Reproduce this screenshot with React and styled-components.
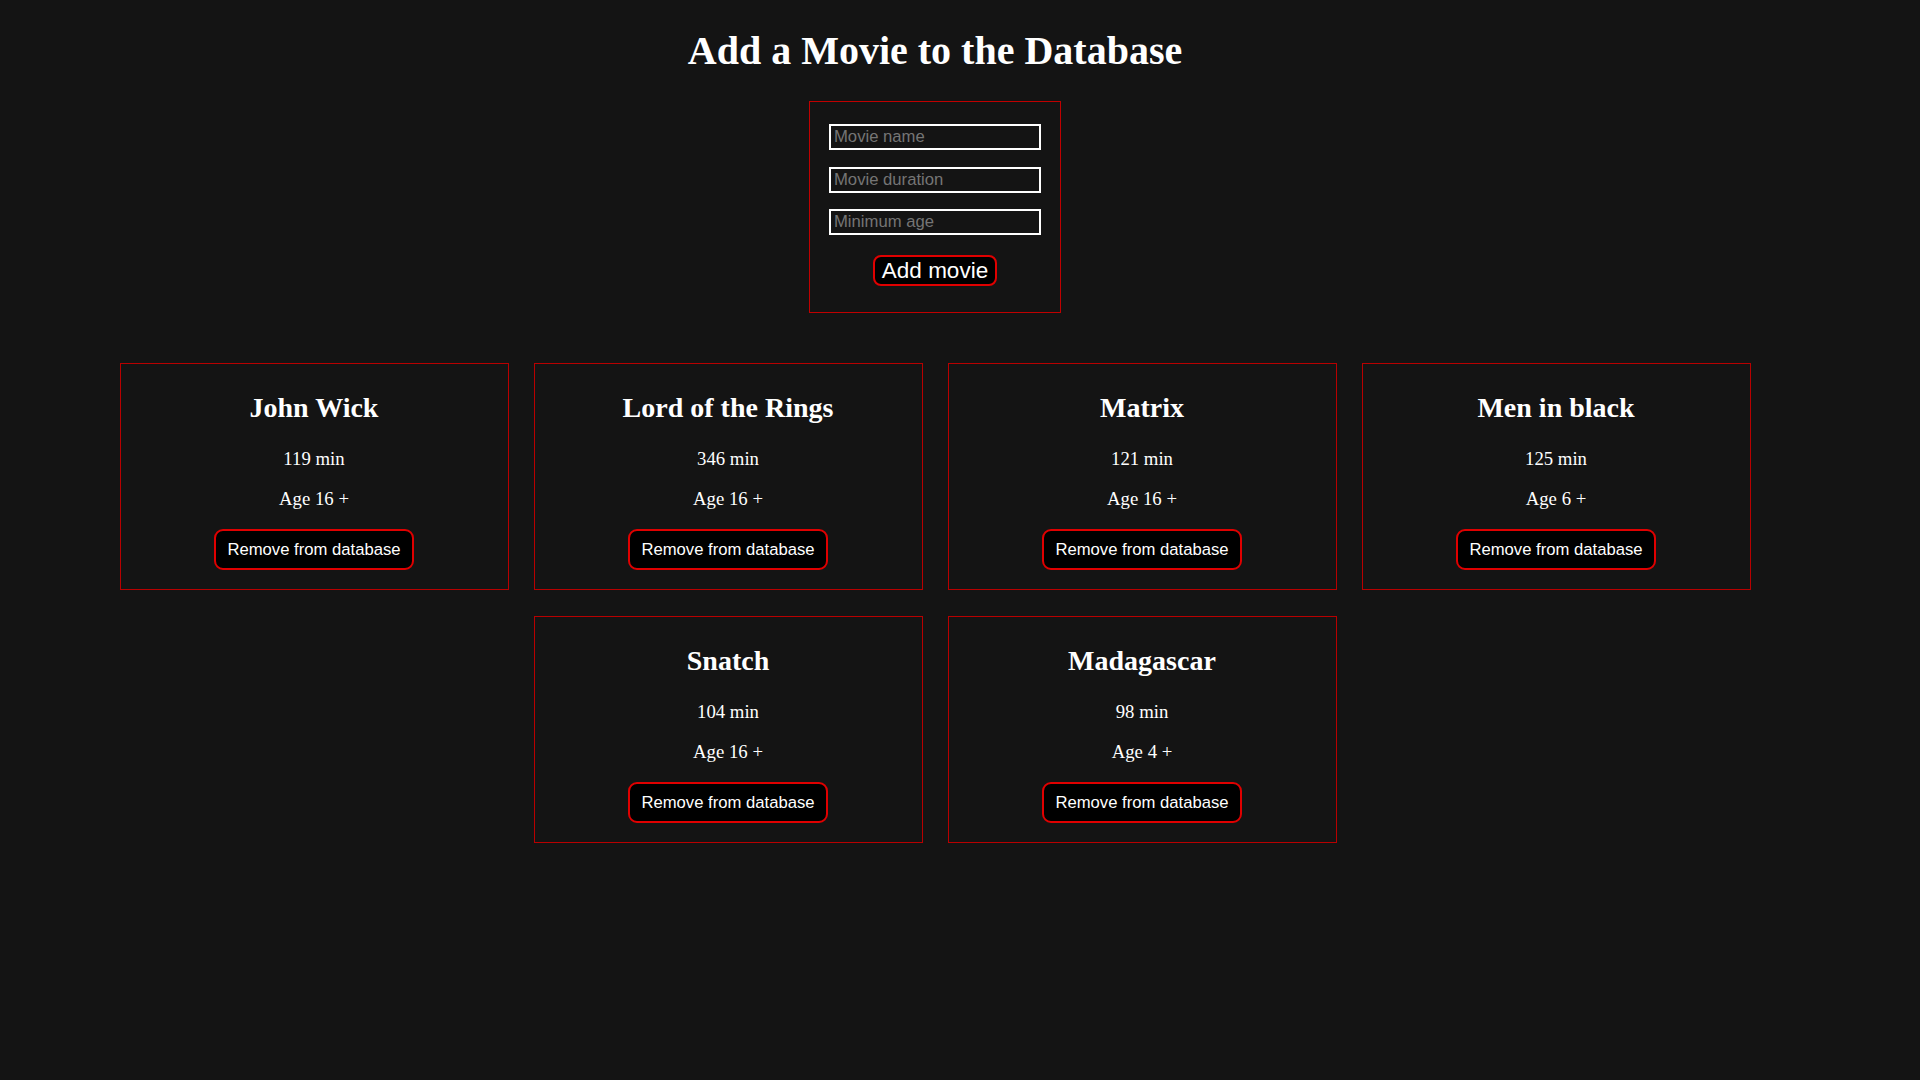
import React, { useState } from "react";
import styled, { createGlobalStyle } from "styled-components";

const initialMovies = [
  { id: 1, name: "John Wick", duration: 119, age: 16 },
  { id: 2, name: "Lord of the Rings", duration: 346, age: 16 },
  { id: 3, name: "Matrix", duration: 121, age: 16 },
  { id: 4, name: "Men in black", duration: 125, age: 6 },
  { id: 5, name: "Snatch", duration: 104, age: 16 },
  { id: 6, name: "Madagascar", duration: 98, age: 4 },
];

const GlobalStyle = createGlobalStyle`
  html {
    color-scheme: dark;
    overflow-x: scroll;
    overflow-y: hidden;
  }
  html::-webkit-scrollbar {
    height: 19px;
    background: #2b2b2b;
  }
  html::-webkit-scrollbar-thumb {
    background: #9f9f9f;
    border-radius: 8px;
    border: 3px solid #2b2b2b;
    border-left-width: 2px;
    border-right-width: 2px;
  }
  body {
    margin: 0;
    background: #141414;
    color: #fff;
    font-family: "Liberation Serif", "Times New Roman", serif;
  }
`;

const Page = styled.div`
  width: 1870px;
  min-height: calc(100vh - 19px);
  display: flex;
  flex-direction: column;
  align-items: center;
  padding-top: 28px;
  box-sizing: border-box;
`;

const Title = styled.h1`
  margin: 0 0 27px;
  font-size: 40px;
  line-height: 46px;
  font-weight: bold;
`;

const Form = styled.form`
  width: 252px;
  box-sizing: border-box;
  border: 1px solid #c00000;
  padding: 22px 19px 26px;
  display: flex;
  flex-direction: column;
  align-items: center;
  gap: 16.5px;
  margin-bottom: 50px;
`;

const Input = styled.input`
  width: 100%;
  height: 26px;
  box-sizing: border-box;
  border: 2px solid #fff;
  background: #141414;
  color: #fff;
  padding: 0 3px;
  font-family: "Liberation Sans", Arial, sans-serif;
  font-size: 16.67px;
  outline: none;
  &::placeholder {
    color: #757575;
  }
`;

const AddButton = styled.button`
  margin-top: 3px;
  padding: 1px 7px;
  border: 2.5px solid #e00000;
  border-radius: 8px;
  background: #000;
  color: #fff;
  font-family: "Liberation Sans", Arial, sans-serif;
  font-size: 22.5px;
  line-height: 25px;
  cursor: pointer;
`;

const Grid = styled.div`
  width: 1632px;
  display: flex;
  flex-wrap: wrap;
  justify-content: center;
  column-gap: 25px;
  row-gap: 26px;
`;

const Card = styled.div`
  width: 389px;
  box-sizing: border-box;
  border: 1px solid #b80000;
  padding: 28.5px 20px 18.5px;
  display: flex;
  flex-direction: column;
  align-items: center;
  text-align: center;
`;

const CardTitle = styled.h2`
  margin: 0 0 24px;
  font-size: 28px;
  line-height: 32px;
  font-weight: bold;
`;

const Info = styled.p`
  margin: 0 0 ${(p) => (p.$last ? "19px" : "18px")};
  font-size: 18.75px;
  line-height: 22px;
`;

const RemoveButton = styled.button`
  padding: 8px 11px;
  border: 2.5px solid #e00000;
  border-radius: 9px;
  background: #000;
  color: #fff;
  font-family: "Liberation Sans", Arial, sans-serif;
  font-size: 16.67px;
  line-height: 21px;
  cursor: pointer;
`;

export default function App() {
  const [movies, setMovies] = useState(initialMovies);
  const [name, setName] = useState("");
  const [duration, setDuration] = useState("");
  const [age, setAge] = useState("");

  const addMovie = (e) => {
    e.preventDefault();
    if (!name) return;
    setMovies([
      ...movies,
      { id: Date.now(), name, duration: Number(duration), age: Number(age) },
    ]);
    setName("");
    setDuration("");
    setAge("");
  };

  const removeMovie = (id) => {
    setMovies(movies.filter((m) => m.id !== id));
  };

  return (
    <>
      <GlobalStyle />
      <Page>
        <Title>Add a Movie to the Database</Title>
        <Form onSubmit={addMovie}>
          <Input
            placeholder="Movie name"
            value={name}
            onChange={(e) => setName(e.target.value)}
          />
          <Input
            placeholder="Movie duration"
            value={duration}
            onChange={(e) => setDuration(e.target.value)}
          />
          <Input
            placeholder="Minimum age"
            value={age}
            onChange={(e) => setAge(e.target.value)}
          />
          <AddButton type="submit">Add movie</AddButton>
        </Form>
        <Grid>
          {movies.map((movie) => (
            <Card key={movie.id}>
              <CardTitle>{movie.name}</CardTitle>
              <Info>{movie.duration} min</Info>
              <Info $last>Age {movie.age} +</Info>
              <RemoveButton onClick={() => removeMovie(movie.id)}>
                Remove from database
              </RemoveButton>
            </Card>
          ))}
        </Grid>
      </Page>
    </>
  );
}
